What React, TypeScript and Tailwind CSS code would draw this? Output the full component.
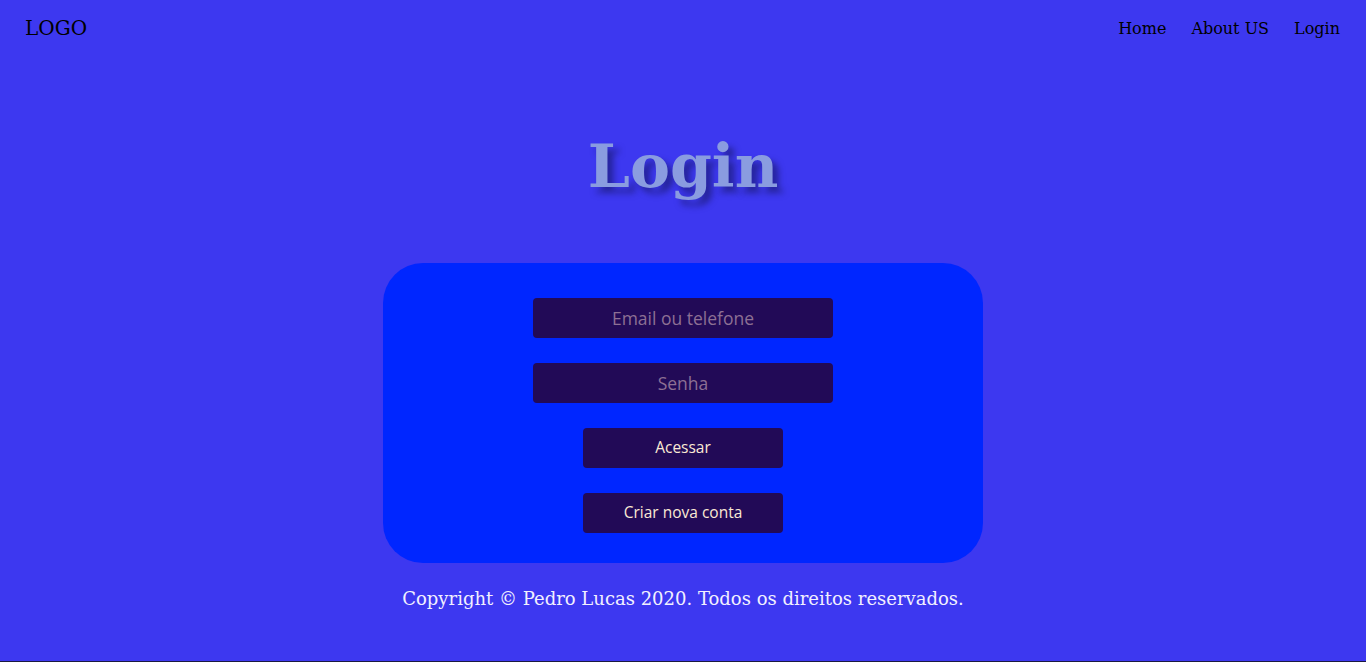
export default function App() {
  const serif = { fontFamily: '"DejaVu Serif", serif' };
  return (
    <div className="min-h-[662px] w-full bg-[#3d38f0] flex flex-col border-b border-[#1a1a40]" style={serif}>
      <header className="flex items-center justify-between h-[56px] pl-[25px] pr-[26px]">
        <span className="text-[20px] text-black font-['DejaVu_Serif',serif]">LOGO</span>
        <nav className="flex gap-[25px] pt-[2px] text-[16px] text-black font-['DejaVu_Serif',serif]">
          <a href="#">Home</a>
          <a href="#">About US</a>
          <a href="#">Login</a>
        </nav>
      </header>

      <h1 className="mt-[70px] text-center text-[60px] leading-[80px] font-bold text-[#8a9ce0] [text-shadow:6px_6px_6px_rgba(20,20,90,0.55)] font-['DejaVu_Serif',serif]">
        Login
      </h1>

      <form className="mx-auto mt-[57px] w-[600px] h-[300px] rounded-[40px] bg-[#0026ff] flex flex-col items-center pt-[35px] gap-[25px] font-['Open_Sans',sans-serif]">
        <input
          type="text"
          placeholder="Email ou telefone"
          className="w-[300px] h-[40px] rounded-[4px] bg-[#220a57] text-center text-[17.5px] text-white placeholder:text-[#8d7094] outline-none"
        />
        <input
          type="password"
          placeholder="Senha"
          className="w-[300px] h-[40px] rounded-[4px] bg-[#220a57] text-center text-[17.5px] text-white placeholder:text-[#8d7094] outline-none"
        />
        <button type="button" className="w-[200px] h-[40px] rounded-[4px] bg-[#220a57] text-[15.5px] text-[#fbe9d4]">
          Acessar
        </button>
        <button type="button" className="w-[200px] h-[40px] rounded-[4px] bg-[#220a57] text-[15.5px] text-[#fbe9d4]">
          Criar nova conta
        </button>
      </form>

      <p className="mt-[22px] text-center text-[18px] text-[#f2f0ff] font-['DejaVu_Serif',serif]">
        Copyright © Pedro Lucas 2020. Todos os direitos reservados.
      </p>
    </div>
  );
}
